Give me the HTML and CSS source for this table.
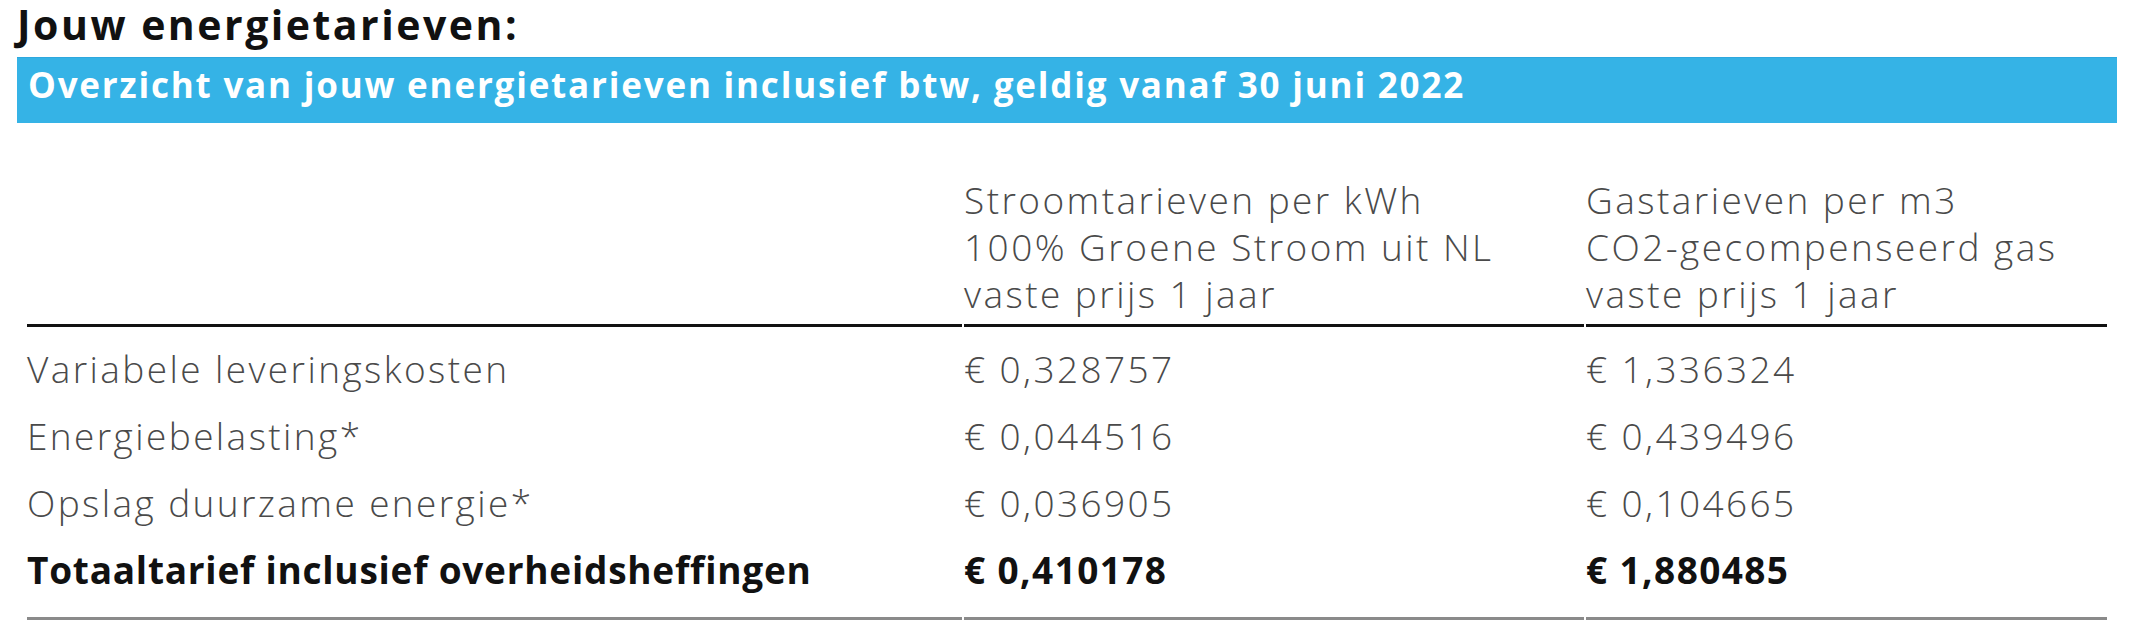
FILE: index.html
```html
<!DOCTYPE html>
<html lang="nl">
<head>
<meta charset="utf-8">
<title>Jouw energietarieven</title>
<link rel="stylesheet" href="styles.css">
</head>
<body>
<div class="page">
  <h1 class="title">Jouw energietarieven:</h1>
  <div class="banner">Overzicht van jouw energietarieven inclusief btw, geldig vanaf 30 juni 2022</div>
  <table class="rates">
    <colgroup>
      <col class="c1"><col class="c2"><col class="c3">
    </colgroup>
    <thead>
      <tr>
        <th></th>
        <th>Stroomtarieven per kWh<br>100% Groene Stroom uit NL<br>vaste prijs 1 jaar</th>
        <th>Gastarieven per m3<br>CO2-gecompenseerd gas<br>vaste prijs 1 jaar</th>
      </tr>
    </thead>
    <tbody>
      <tr class="first">
        <td>Variabele leveringskosten</td>
        <td>€ 0,328757</td>
        <td>€ 1,336324</td>
      </tr>
      <tr>
        <td>Energiebelasting*</td>
        <td>€ 0,044516</td>
        <td>€ 0,439496</td>
      </tr>
      <tr>
        <td>Opslag duurzame energie*</td>
        <td>€ 0,036905</td>
        <td>€ 0,104665</td>
      </tr>
      <tr class="total">
        <td class="label">Totaaltarief inclusief overheidsheffingen</td>
        <td>€ 0,410178</td>
        <td>€ 1,880485</td>
      </tr>
    </tbody>
  </table>
</div>
</body>
</html>
```
FILE: styles.css
```css
html, body {
  margin: 0;
  padding: 0;
  background: #ffffff;
}

body {
  font-family: "Open Sans", "Liberation Sans", sans-serif;
  color: #4a4a4a;
}

.page {
  width: 2140px;
  padding-top: 2px;
}

.title {
  margin: 0 0 0 17px;
  font-weight: 700;
  font-size: 41px;
  line-height: 44px;
  letter-spacing: 2.5px;
  color: #111111;
}

.banner {
  margin: 11px 23px 0 17px;
  height: 54px;
  padding: 0 0 11px 11px;
  background: #35b3e6;
  border-top: 1px solid #2ea8de;
  box-sizing: content-box;
  color: #ffffff;
  font-weight: 700;
  font-size: 35px;
  line-height: 53px;
  letter-spacing: 1.8px;
  white-space: nowrap;
}

.rates {
  margin-left: 25px;
  width: 2084px;
  table-layout: fixed;
  border-collapse: separate;
  border-spacing: 2px 0;
}

.c1 { width: 935px; }
.c2 { width: 620px; }
.c3 { width: 521px; }

.rates th {
  padding: 53px 0 7px 0;
  text-align: left;
  vertical-align: bottom;
  font-weight: 300;
  font-size: 37px;
  line-height: 47px;
  letter-spacing: 2.45px;
  color: #4a4a4a;
  border-bottom: 3px solid #111111;
  white-space: nowrap;
}

.rates td {
  padding: 0;
  font-weight: 300;
  font-size: 37px;
  line-height: 67px;
  letter-spacing: 2.4px;
  color: #4a4a4a;
  white-space: nowrap;
}

.rates tr.first td {
  padding-top: 8px;
}

.rates tr.total td {
  padding-bottom: 14px;
  font-weight: 700;
  letter-spacing: 1.4px;
  color: #111111;
  border-bottom: 3px solid #8a8a8a;
}

.rates tr.total td.label {
  letter-spacing: 0.75px;
}
```
